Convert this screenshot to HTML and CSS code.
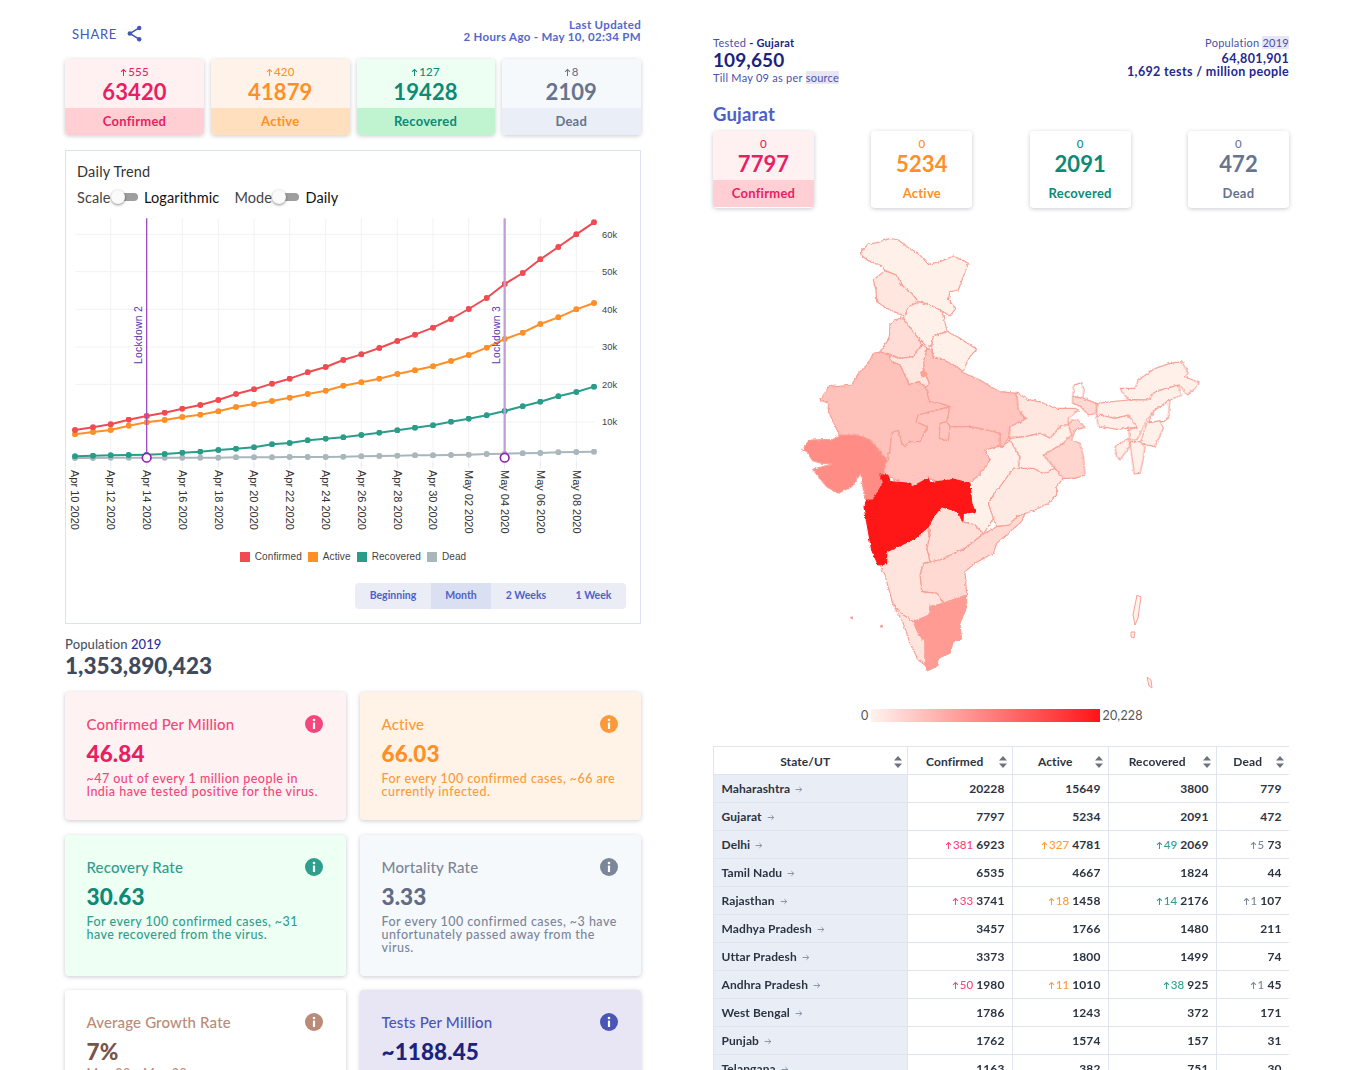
FILE: index.html
```html
<!DOCTYPE html>
<html lang="en">
<head>
<meta charset="utf-8">
<title>India COVID-19 Tracker</title>
<link rel="stylesheet" href="styles.css">
</head>
<body>
<svg class="sprite" aria-hidden="true">
  <symbol id="up" viewBox="0 0 10 12"><path d="M5 11V2M1.5 5.2 5 1.6l3.5 3.6" fill="none" stroke="currentColor" stroke-width="1.5"/></symbol>
  <symbol id="right" viewBox="0 0 12 10"><path d="M1 5h9M6.6 1.5 10.2 5 6.6 8.5" fill="none" stroke="currentColor" stroke-width="1.3"/></symbol>
  <symbol id="info" viewBox="0 0 18 18"><circle cx="9" cy="9" r="9" fill="currentColor"/><circle cx="9" cy="5" r="1.3" fill="#fff"/><rect x="7.9" y="7.5" width="2.2" height="6.5" rx=".6" fill="#fff"/></symbol>
  <symbol id="sort" viewBox="0 0 8 12"><path d="M4 0 8 4.6H0ZM4 12 0 7.4h8Z" fill="#6b7280"/></symbol>
</svg>
<main class="page">
  <section class="col">
    <header class="top">
      <div class="share">SHARE
        <svg class="share-ic" viewBox="0 0 16 18"><path d="M13 3 3 9l10 6" fill="none" stroke="currentColor" stroke-width="1.6"/><circle cx="13" cy="3" r="2.4" fill="currentColor"/><circle cx="3" cy="9" r="2.4" fill="currentColor"/><circle cx="13" cy="15" r="2.4" fill="currentColor"/></svg>
      </div>
      <div class="updated">Last Updated<br>2 Hours Ago - May 10, 02:34 PM</div>
    </header>

    <div class="stats">
      <div class="stat red"><div class="stat-top"><div class="delta"><svg class="up"><use href="#up"/></svg>555</div><div class="num">63420</div></div><div class="lab">Confirmed</div></div>
      <div class="stat orange"><div class="stat-top"><div class="delta"><svg class="up"><use href="#up"/></svg>420</div><div class="num">41879</div></div><div class="lab">Active</div></div>
      <div class="stat green"><div class="stat-top"><div class="delta"><svg class="up"><use href="#up"/></svg>127</div><div class="num">19428</div></div><div class="lab">Recovered</div></div>
      <div class="stat grey"><div class="stat-top"><div class="delta"><svg class="up"><use href="#up"/></svg>8</div><div class="num">2109</div></div><div class="lab">Dead</div></div>
    </div>

    <div class="chart-card">
      <div class="chart-title">Daily Trend</div>
      <div class="controls">
        <span class="ctl">Scale</span><span class="switch"><i></i></span><span class="val">Logarithmic</span>
        <span class="ctl mode">Mode</span><span class="switch"><i></i></span><span class="val">Daily</span>
      </div>
      <svg class="chart" viewBox="18 15 1722 990">
        <defs>
          <marker id="mr" markerWidth="3" markerHeight="3" refX="1.5" refY="1.5" viewBox="0 0 3 3"><circle cx="1.5" cy="1.5" r="1.5" fill="#ef4b50"/></marker>
          <marker id="mo" markerWidth="3" markerHeight="3" refX="1.5" refY="1.5" viewBox="0 0 3 3"><circle cx="1.5" cy="1.5" r="1.5" fill="#ff8f26"/></marker>
          <marker id="mg" markerWidth="3" markerHeight="3" refX="1.5" refY="1.5" viewBox="0 0 3 3"><circle cx="1.5" cy="1.5" r="1.5" fill="#2a9d8a"/></marker>
          <marker id="ms" markerWidth="3" markerHeight="3" refX="1.5" refY="1.5" viewBox="0 0 3 3"><circle cx="1.5" cy="1.5" r="1.5" fill="#a9b6bc"/></marker>
        </defs>
        <path class="grid" d="M45 73H1602M45 185H1602M45 298H1602M45 411H1602M45 523H1602M45 636H1602M152 25V768M260 25V768M367 25V768M475 25V768M582 25V768M689 25V768M797 25V768M904 25V768M1012 25V768M1119 25V768M1226 25V768M1334 25V768M1441 25V768M1549 25V768"/>
        <path class="tick" d="M45 758V776M152 758V776M260 758V776M367 758V776M475 758V776M582 758V776M689 758V776M797 758V776M904 758V776M1012 758V776M1119 758V776M1226 758V776M1334 758V776M1441 758V776M1549 758V776"/>
        <polyline class="ln ls" points="45,744 99,744 152,743 206,743 260,743 314,743 367,743 421,743 475,743 528,742 582,742 636,742 689,741 743,741 797,741 850,740 904,739 958,738 1012,737 1065,736 1119,736 1173,735 1226,734 1280,732 1334,731 1388,730 1441,729 1495,727 1549,726 1602,725"/>
        <polyline class="ln lg" points="45,739 99,737 152,736 206,735 260,734 314,732 367,728 421,725 475,720 528,716 582,712 636,703 689,699 743,691 797,686 850,682 904,675 958,668 1012,661 1065,653 1119,646 1173,635 1226,626 1280,616 1334,603 1388,589 1441,575 1495,559 1549,546 1602,530"/>
        <polyline class="ln lo" points="45,673 99,666 152,660 206,647 260,637 314,630 367,621 421,614 475,604 528,591 582,582 636,573 689,563 743,552 797,542 850,527 904,517 958,506 1012,492 1065,481 1119,469 1173,453 1226,435 1280,413 1334,387 1388,368 1441,342 1495,322 1549,298 1602,279"/>
        <polyline class="ln lr" points="45,660 99,652 152,643 206,629 260,618 314,608 367,596 421,585 475,570 528,552 582,538 636,521 689,506 743,487 797,471 850,450 904,433 958,414 1012,393 1065,374 1119,353 1173,327 1226,297 1280,264 1334,222 1388,189 1441,148 1495,111 1549,73 1602,37"/>
        <line class="lock l2" x1="260" y1="25" x2="260" y2="730"/>
        <line class="lock l3" x1="1334" y1="25" x2="1334" y2="730"/>
        <circle class="lock-dot" cx="260" cy="743" r="13"/>
        <circle class="lock-dot" cx="1334" cy="743" r="13"/>
        <text class="lock-t" transform="rotate(-90 235 462)" x="235" y="462" dy="11">Lockdown 2</text>
        <text class="lock-t" transform="rotate(-90 1309 462)" x="1309" y="462" dy="11">Lockdown 3</text>
        <g class="ylab">
          <text x="1626" y="73" dy="10">60k</text><text x="1626" y="185" dy="10">50k</text><text x="1626" y="298" dy="10">40k</text><text x="1626" y="411" dy="10">30k</text><text x="1626" y="523" dy="10">20k</text><text x="1626" y="636" dy="10">10k</text>
        </g>
        <g class="xlab">
          <text transform="rotate(90 45 780)" x="45" y="780" dy="11">Apr 10 2020</text>
          <text transform="rotate(90 152 780)" x="152" y="780" dy="11">Apr 12 2020</text>
          <text transform="rotate(90 260 780)" x="260" y="780" dy="11">Apr 14 2020</text>
          <text transform="rotate(90 367 780)" x="367" y="780" dy="11">Apr 16 2020</text>
          <text transform="rotate(90 475 780)" x="475" y="780" dy="11">Apr 18 2020</text>
          <text transform="rotate(90 582 780)" x="582" y="780" dy="11">Apr 20 2020</text>
          <text transform="rotate(90 689 780)" x="689" y="780" dy="11">Apr 22 2020</text>
          <text transform="rotate(90 797 780)" x="797" y="780" dy="11">Apr 24 2020</text>
          <text transform="rotate(90 904 780)" x="904" y="780" dy="11">Apr 26 2020</text>
          <text transform="rotate(90 1012 780)" x="1012" y="780" dy="11">Apr 28 2020</text>
          <text transform="rotate(90 1119 780)" x="1119" y="780" dy="11">Apr 30 2020</text>
          <text transform="rotate(90 1226 780)" x="1226" y="780" dy="11">May 02 2020</text>
          <text transform="rotate(90 1334 780)" x="1334" y="780" dy="11">May 04 2020</text>
          <text transform="rotate(90 1441 780)" x="1441" y="780" dy="11">May 06 2020</text>
          <text transform="rotate(90 1549 780)" x="1549" y="780" dy="11">May 08 2020</text>
        </g>
      </svg>
      <div class="legend">
        <span class="lg-i"><i class="sw-r"></i>Confirmed</span>
        <span class="lg-i"><i class="sw-o"></i>Active</span>
        <span class="lg-i"><i class="sw-g"></i>Recovered</span>
        <span class="lg-i"><i class="sw-s"></i>Dead</span>
      </div>
      <div class="ranges">
        <span class="rg w-b">Beginning</span><span class="rg w-m on">Month</span><span class="rg w-2">2 Weeks</span><span class="rg w-1">1 Week</span>
      </div>
    </div>

    <div class="pop-label">Population <b>2019</b></div>
    <div class="pop-num">1,353,890,423</div>

    <div class="facts">
      <article class="fact f-red"><div class="f-head"><span>Confirmed Per Million</span><svg class="info"><use href="#info"/></svg></div><div class="f-num">46.84</div><p>~47 out of every 1 million people in India have tested positive for the virus.</p></article>
      <article class="fact f-orange"><div class="f-head"><span>Active</span><svg class="info"><use href="#info"/></svg></div><div class="f-num">66.03</div><p>For every 100 confirmed cases, ~66 are currently infected.</p></article>
      <article class="fact f-green"><div class="f-head"><span>Recovery Rate</span><svg class="info"><use href="#info"/></svg></div><div class="f-num">30.63</div><p>For every 100 confirmed cases, ~31 have recovered from the virus.</p></article>
      <article class="fact f-grey"><div class="f-head"><span>Mortality Rate</span><svg class="info"><use href="#info"/></svg></div><div class="f-num">3.33</div><p>For every 100 confirmed cases, ~3 have unfortunately passed away from the virus.</p></article>
      <article class="fact f-brown"><div class="f-head"><span>Average Growth Rate</span><svg class="info"><use href="#info"/></svg></div><div class="f-num">7%</div><p>May 03 - May 09</p></article>
      <article class="fact f-blue"><div class="f-head"><span>Tests Per Million</span><svg class="info"><use href="#info"/></svg></div><div class="f-num">~1188.45</div></article>
    </div>
  </section>

  <section class="col">
    <div class="tests">
      <div>
        <div class="t-sm">Tested <b>- Gujarat</b></div>
        <div class="t-big">109,650</div>
        <div class="t-sm">Till May 09 as per <mark>source</mark></div>
      </div>
      <div class="t-right">
        <div class="t-sm">Population <mark>2019</mark></div>
        <div class="t-mid t-first">64,801,901</div>
        <div class="t-mid">1,692 tests / million people</div>
      </div>
    </div>
    <h2 class="state">Gujarat</h2>
    <div class="stats2">
      <div class="stat2 red on"><div class="stat-top"><div class="delta">0</div><div class="num">7797</div></div><div class="lab">Confirmed</div></div>
      <div class="stat2 orange"><div class="stat-top"><div class="delta">0</div><div class="num">5234</div></div><div class="lab">Active</div></div>
      <div class="stat2 green"><div class="stat-top"><div class="delta">0</div><div class="num">2091</div></div><div class="lab">Recovered</div></div>
      <div class="stat2 grey"><div class="stat-top"><div class="delta">0</div><div class="num">472</div></div><div class="lab">Dead</div></div>
    </div>

    <svg class="map" viewBox="713 230 576 470">
      <defs>
        <filter id="rough" x="-3%" y="-3%" width="106%" height="106%">
          <feTurbulence type="fractalNoise" baseFrequency=".3" numOctaves="2" seed="4"/>
          <feDisplacementMap in="SourceGraphic" scale="3" xChannelSelector="R" yChannelSelector="G"/>
        </filter>
      </defs>
      <g class="rough">
      <g transform="translate(790 230) scale(.33333)" class="states">
        <path fill="#fff0e9" d="M213 75 218 60 235 42 262 38 300 25 325 30 350 50 385 70 415 103 450 95 490 78 535 100 520 140 505 180 480 185 475 210 498 235 480 257 455 242 420 225 385 215 365 190 340 170 318 135 285 122 270 105 235 92Z"/>
        <path fill="#ffe6df" d="M250 150 285 122 318 135 340 170 365 190 385 215 355 232 345 258 300 240 260 215 258 180Z"/>
        <path fill="#fff0e9" d="M355 232 385 215 420 225 455 242 472 305 430 318 425 350 405 345 385 325 365 300 340 262 345 258Z"/>
        <path fill="#ffdcd5" d="M270 365 298 325 300 280 335 262 365 300 385 325 395 345 370 380 330 385 300 372Z"/>
        <path fill="#fff0e9" d="M425 350 430 318 472 305 505 322 560 358 535 385 520 425 500 410 450 385 430 385Z"/>
        <path fill="#ffe6df" d="M298 375 330 385 370 380 395 345 415 355 402 390 402 420 418 460 408 472 385 455 358 465 330 405 305 395Z"/>
        <path fill="#ffc2bb" d="M90 510 120 465 140 470 185 465 205 430 235 400 250 370 270 366 298 375 305 395 330 405 358 465 385 455 408 472 418 515 445 518 480 530 385 555 378 575 412 590 390 635 360 635 345 650 335 640 325 600 305 610 300 660 290 690 240 630 205 615 150 620 130 575 115 545 115 520Z"/>
        <path fill="#ffc5be" d="M425 355 430 385 450 385 500 410 520 428 570 450 610 475 630 485 680 490 685 540 708 567 660 590 655 625 640 650 630 648 630 610 590 600 540 590 480 590 470 575 480 530 445 518 418 515 408 472 418 460 402 420 402 390 410 358Z"/>
        <path fill="#ffc5be" d="M378 575 385 555 480 530 470 575 480 590 540 590 590 600 630 610 630 648 585 660 600 690 585 720 540 760 495 748 445 755 415 745 365 770 330 755 280 735 270 710 295 690 300 660 305 610 325 600 335 640 345 650 360 635 390 635 412 590Z"/>
        <path fill="none" d="M470 575 450 580 448 625 475 632 480 590"/>
        <path fill="#ff8c85" d="M38 660 50 640 60 630 130 628 150 615 205 615 240 630 290 690 280 735 270 775 250 810 225 810 212 730 185 770 145 790 110 770 68 718 128 702 95 700 68 692 50 665Z"/>
        <path fill="#ff9f95" d="M392 428 402 420 412 435 398 442Z"/>
      </g>
      <g transform="translate(790 460) scale(.33333)" class="states">
        <path fill="#fff0e9" d="M540 70 585 25 600 0 585-30 630-42 640-40 660-60 690-10 685 25 670 25 645 80 620 90 595 130 610 175 580 222 555 195 520 185 520 160 555 155 545 130Z"/>
        <path fill="#ffeae3" d="M630 80 670 25 730 25 760 40 795 25 820 55 800 80 800 105 775 130 735 150 680 170 660 195 620 200 610 175 595 130 620 90Z"/>
        <path fill="#ffe0d9" d="M415 200 430 170 455 140 505 155 518 185 555 195 580 222 525 265 450 300 400 310 420 305 410 265 420 225Z"/>
        <path fill="#ffd9d2" d="M680 170 705 160 695 185 660 215 620 250 610 280 555 310 525 335 530 405 460 430 440 400 395 395 390 345 400 310 450 300 525 265 580 222 620 200 660 195Z"/>
        <path fill="#ffe4dd" d="M270 315 290 310 290 275 345 250 375 235 415 200 420 225 410 265 420 305 400 310 390 345 395 395 440 400 460 430 420 440 418 465 370 485 340 465 310 435 290 365 285 345Z"/>
        <path fill="#ffe4dd" d="M310 435 340 465 370 485 385 520 405 545 405 615 385 600 360 550 340 490Z"/>
        <path fill="#ff9b93" d="M460 430 530 405 530 440 510 490 515 540 490 545 480 580 445 595 440 620 412 632 405 615 405 545 385 520 370 485 418 465 420 440Z"/>
        <path class="mh" fill="#ff1417" d="M270 45 293 45 300 65 360 70 365 82 415 55 420 68 480 60 490 58 540 70 545 130 555 155 520 160 518 185 505 155 455 140 430 170 415 200 375 235 345 250 290 275 290 310 265 315 245 270 222 140 230 120 250 120 270 85 280 65Z"/>
        <path fill="#fbb" d="M183 471h4v5h-4ZM273 496h4v5h-4Z"/>
      </g>
      <g transform="translate(1000 340) scale(.33333)" class="states">
        <path fill="#ffe6df" d="M50 155 80 178 120 185 165 205 225 205 235 210 205 235 205 255 185 255 150 295 120 280 75 290 28 292 30 260 78 237 55 210Z"/>
        <path fill="#fff0e9" d="M28 295 75 290 120 280 150 295 185 255 205 255 215 285 190 310 130 345 165 385 130 400 100 385 55 385 60 350 30 300Z"/>
        <path fill="#ffd5ce" d="M215 240 235 240 255 262 225 270 215 300 240 310 250 350 255 405 225 415 190 415 165 385 130 345 190 310 215 285 205 255Z"/>
        <path fill="#fff" d="M218 170 222 135 245 128 252 150 248 175Z"/>
        <path fill="#ffd9d2" d="M218 170 250 175 290 190 288 220 265 225 240 198 218 190Z"/>
        <path fill="#fff0e9" d="M362 145 405 145 415 120 465 85 510 70 545 65 565 100 555 110 597 128 585 145 560 165 540 135 500 145 465 155 445 180 385 178 365 155Z"/>
        <path fill="#fff0e9" d="M290 190 385 180 445 180 465 155 535 135 545 165 510 180 465 210 440 240 430 260 410 300 390 300 385 268 410 262 385 225 345 235 300 228 290 230Z"/>
        <path fill="#fff0e9" d="M290 230 300 225 345 235 385 225 410 262 350 268 295 258Z"/>
        <path fill="#fff" d="M510 180 508 195 505 235 490 245 445 245 465 210Z"/>
        <path fill="#fff0e9" d="M440 250 480 242 490 265 465 320 420 310Z"/>
        <path fill="#fff0e9" d="M390 305 420 305 435 320 430 355 420 400 403 402 395 350Z"/>
        <path fill="#fff0e9" d="M345 320 385 295 390 320 370 345 360 360 350 350Z"/>
      </g>
      </g>
      <path class="islands" d="M1137 595 1141 597 1138 618 1135 625 1133 615ZM1131 632 1135 632 1134 638 1131 637ZM1147 677 1151 680 1152 688 1149 686Z"/>
    </svg>

    <div class="scale"><span>0</span><i class="ramp"></i><span>20,228</span></div>

    <div class="table-wrap">
      <table class="tbl">
        <colgroup><col class="c1"><col class="c2"><col class="c3"><col class="c4"><col class="c5"></colgroup>
        <thead><tr>
          <th>State/UT<svg class="sort"><use href="#sort"/></svg></th>
          <th>Confirmed<svg class="sort"><use href="#sort"/></svg></th>
          <th>Active<svg class="sort"><use href="#sort"/></svg></th>
          <th>Recovered<svg class="sort"><use href="#sort"/></svg></th>
          <th>Dead<svg class="sort"><use href="#sort"/></svg></th>
        </tr></thead>
        <tbody>
          <tr><td>Maharashtra<svg class="go"><use href="#right"/></svg></td><td>20228</td><td>15649</td><td>3800</td><td>779</td></tr>
          <tr><td>Gujarat<svg class="go"><use href="#right"/></svg></td><td>7797</td><td>5234</td><td>2091</td><td>472</td></tr>
          <tr><td>Delhi<svg class="go"><use href="#right"/></svg></td><td><span class="d red"><svg class="up"><use href="#up"/></svg>381</span>6923</td><td><span class="d orange"><svg class="up"><use href="#up"/></svg>327</span>4781</td><td><span class="d green"><svg class="up"><use href="#up"/></svg>49</span>2069</td><td><span class="d grey"><svg class="up"><use href="#up"/></svg>5</span>73</td></tr>
          <tr><td>Tamil Nadu<svg class="go"><use href="#right"/></svg></td><td>6535</td><td>4667</td><td>1824</td><td>44</td></tr>
          <tr><td>Rajasthan<svg class="go"><use href="#right"/></svg></td><td><span class="d red"><svg class="up"><use href="#up"/></svg>33</span>3741</td><td><span class="d orange"><svg class="up"><use href="#up"/></svg>18</span>1458</td><td><span class="d green"><svg class="up"><use href="#up"/></svg>14</span>2176</td><td><span class="d grey"><svg class="up"><use href="#up"/></svg>1</span>107</td></tr>
          <tr><td>Madhya Pradesh<svg class="go"><use href="#right"/></svg></td><td>3457</td><td>1766</td><td>1480</td><td>211</td></tr>
          <tr><td>Uttar Pradesh<svg class="go"><use href="#right"/></svg></td><td>3373</td><td>1800</td><td>1499</td><td>74</td></tr>
          <tr><td>Andhra Pradesh<svg class="go"><use href="#right"/></svg></td><td><span class="d red"><svg class="up"><use href="#up"/></svg>50</span>1980</td><td><span class="d orange"><svg class="up"><use href="#up"/></svg>11</span>1010</td><td><span class="d green"><svg class="up"><use href="#up"/></svg>38</span>925</td><td><span class="d grey"><svg class="up"><use href="#up"/></svg>1</span>45</td></tr>
          <tr><td>West Bengal<svg class="go"><use href="#right"/></svg></td><td>1786</td><td>1243</td><td>372</td><td>171</td></tr>
          <tr><td>Punjab<svg class="go"><use href="#right"/></svg></td><td>1762</td><td>1574</td><td>157</td><td>31</td></tr>
          <tr><td>Telangana<svg class="go"><use href="#right"/></svg></td><td>1163</td><td>382</td><td>751</td><td>30</td></tr>
        </tbody>
      </table>
    </div>
  </section>
</main>
</body>
</html>
```
FILE: styles.css
```css
* { box-sizing: border-box; }
html, body { margin: 0; height: 1070px; overflow: hidden; background: #fff; }
body { font-family: Lato, "Noto Sans", sans-serif; color: #333; }
.sprite { display: none; }
.page { display: grid; grid-template-columns: 576px 576px; column-gap: 72px; padding-left: 65px; height: 1070px; overflow: hidden; }
.col { min-width: 0; }

.top { display: flex; justify-content: space-between; align-items: flex-start; height: 59px; padding-top: 19px; }
.share { display: flex; align-items: center; gap: 10px; color: #4357b3; font-size: 13px; letter-spacing: .7px; padding: 6px 0 0 7px; }
.share-ic { width: 15px; height: 17px; }
.updated { text-align: right; font-size: 11.5px; line-height: 12px; font-weight: 700; color: #5468c8; letter-spacing: .33px; }

.red { --c: #e91e63; --t: #fff0f2; --b: #ffcfd3; --soft: #f4467a; }
.orange { --c: #ff8f26; --t: #fff3e9; --b: #ffdfbe; --soft: #fb9a3a; }
.green { --c: #0d8a76; --t: #edfff3; --b: #c0f3d0; --soft: #2f9e8d; }
.grey { --c: #67748e; --t: #f6f9fc; --b: #eaeef7; --soft: #7b8699; }

.stats { display: grid; grid-template-columns: 139px 138.5px 138px 139.5px; column-gap: 7px; }
.stat, .stat2 { border-radius: 4px; overflow: hidden; box-shadow: 0 1px 4px rgba(60, 70, 90, .28); color: var(--c); text-align: center; }
.stat { height: 76px; }
.stat-top { height: 49px; background: var(--t); padding-top: 7px; }
.delta { font-size: 11.5px; line-height: 12px; font-weight: 500; letter-spacing: .2px; }
.up { width: 7px; height: 9px; vertical-align: -.5px; margin-right: 1px; color: inherit; }
.num { font-size: 22px; line-height: 27px; font-weight: 700; letter-spacing: .1px; }
.lab { height: 27px; background: var(--b); font-size: 13px; line-height: 26px; font-weight: 700; letter-spacing: .25px; }

.chart-card { margin-top: 15px; height: 474px; border: 1px solid #dde3ee; padding-top: 12px; }
.chart-title { font-size: 14.5px; line-height: 18px; padding-left: 11px; color: #333; letter-spacing: .2px; }
.controls { display: flex; align-items: center; height: 18px; margin-top: 7px; padding-left: 11px; font-size: 14.5px; letter-spacing: .1px; }
.ctl { color: #444; }
.val { color: #111; margin-left: 6.5px; }
.mode { margin-left: 15px; }
.switch { position: relative; width: 20px; height: 8px; border-radius: 4px; background: #9e9e9e; margin-left: 7px; }
.switch i { position: absolute; left: -7px; top: -3px; width: 14px; height: 14px; border-radius: 50%; background: #fafafa; box-shadow: 0 1px 3px rgba(0, 0, 0, .45); }

.chart { display: block; width: 574px; height: 330px; margin-top: 9px; }
.grid { fill: none; stroke: #f1f2f5; stroke-width: 3; }
.tick { fill: none; stroke: #dfe2e8; stroke-width: 2; }
.ln { fill: none; stroke-width: 6; stroke-linejoin: round; }
.lr { stroke: #ef4b50; marker-start: url(#mr); marker-mid: url(#mr); marker-end: url(#mr); }
.lo { stroke: #ff8f26; marker-start: url(#mo); marker-mid: url(#mo); marker-end: url(#mo); }
.lg { stroke: #2a9d8a; marker-start: url(#mg); marker-mid: url(#mg); marker-end: url(#mg); }
.ls { stroke: #a9b6bc; marker-start: url(#ms); marker-mid: url(#ms); marker-end: url(#ms); }
.lock { stroke-width: 4; }
.l2 { stroke: #a64bc0; }
.l3 { stroke: #c49ed8; stroke-width: 7; }
.lock-dot { fill: #fff; stroke: #8e24aa; stroke-width: 5; }
.lock-t { fill: #5e35b1; font-family: "Liberation Sans", sans-serif; font-size: 31px; letter-spacing: .9px; }
.ylab text { fill: #444; font-family: "Liberation Sans", sans-serif; font-size: 28px; }
.xlab text { fill: #333; font-family: "Liberation Sans", sans-serif; font-size: 33px; }

.legend { display: flex; justify-content: center; gap: 6px; height: 14px; margin-top: 5px; font-family: "Liberation Sans", sans-serif; font-size: 10px; line-height: 14px; color: #444; letter-spacing: .1px; }
.lg-i { display: flex; align-items: center; gap: 5px; }
.lg-i i { width: 10px; height: 10px; }
.sw-r { background: #ef4b50; }
.sw-o { background: #ff8f26; }
.sw-g { background: #2a9d8a; }
.sw-s { background: #a9b6bc; }

.ranges { display: flex; width: 271px; height: 26px; margin: 19px 14px 0 auto; border-radius: 4px; overflow: hidden; background: #eaedf6; font-size: 10.5px; line-height: 24px; font-weight: 700; color: #4f61c8; text-align: center; }
.rg { display: block; }
.w-b { width: 76px; }
.w-m { width: 60px; }
.w-2 { width: 70px; }
.w-1 { width: 65px; }
.on { background: #dbdff2; }

.pop-label { margin-top: 12px; font-size: 13px; line-height: 16px; font-weight: 500; color: #4b5568; letter-spacing: .1px; }
.pop-label b { color: #2b2f9e; font-weight: 500; }
.pop-num { font-size: 22.5px; line-height: 28px; font-weight: 900; color: #3f4a5c; letter-spacing: .05px; }

.facts { display: grid; grid-template-columns: 281px 281px; column-gap: 14px; row-gap: 14.5px; margin-top: 12px; }
.fact { padding: 24px 21px 22px 21.5px; border-radius: 4px; box-shadow: 0 1px 4px rgba(60, 70, 90, .28); color: var(--soft); background: var(--t); }
.f-red { --soft: #f4467a; --n: #e91e63; --t: #fff2f3; }
.f-orange { --soft: #fb9a3a; --n: #ff8f26; --t: #fff3e8; }
.f-green { --soft: #2f9e8d; --n: #0d8a76; --t: #eefff4; }
.f-grey { --soft: #7b8699; --n: #5f6c85; --t: #f6f9fc; }
.f-brown { --soft: #b98b78; --n: #795548; --t: #fff; height: 120px; }
.f-blue { --soft: #4b55b5; --n: #1a237e; --t: #e8e6f5; height: 120px; }
.f-head { display: flex; justify-content: space-between; align-items: center; height: 16px; font-size: 15px; font-weight: 500; letter-spacing: .15px; padding-right: 2px; }
.info { width: 18px; height: 18px; }
.f-num { margin-top: 10px; font-size: 22.5px; line-height: 24px; font-weight: 900; color: var(--n); letter-spacing: .1px; }
.fact p { margin: 6px 0 0; font-size: 12.5px; line-height: 13px; font-weight: 500; letter-spacing: .46px; }
.f-brown p { margin-top: 3px; }

.tests { display: flex; justify-content: space-between; height: 96px; padding-top: 36px; color: #2b2f9e; }
.t-sm { font-size: 11px; line-height: 13px; color: #4a50a8; letter-spacing: .25px; }
.t-sm b { font-weight: 700; color: #1a237e; }
.t-big { font-size: 19px; line-height: 22px; font-weight: 700; color: #1a237e; letter-spacing: .1px; }
.t-right { text-align: right; }
.t-mid { font-size: 12.5px; line-height: 13px; font-weight: 700; color: #24288e; letter-spacing: .36px; }
.t-first { margin-top: 3px; }
mark { background: #e8e6f5; color: inherit; }
.state { margin: 6px 0 0; font-size: 18.5px; line-height: 24px; font-weight: 700; color: #4c5fc7; letter-spacing: .2px; }
.stats2 { display: flex; justify-content: space-between; margin-top: 5px; }
.stat2 { width: 101px; height: 77px; background: #fff; }
.stat2 .stat-top { background: #fff; }
.stat2 .lab { background: #fff; }
.stat2.on .stat-top { background: var(--t); }
.stat2.on .lab { background: var(--b); }

.map { display: block; width: 576px; height: 470px; margin-top: 22px; }
.rough { filter: url(#rough); }
.states path { stroke: #f8a096; stroke-width: 3.5; stroke-linejoin: round; }
.states .mh { stroke: #ff1417; }
.islands { fill: #fff0e9; stroke: #f8a096; stroke-width: 1; }
.scale { display: flex; align-items: center; gap: 2px; height: 14px; margin: 8px 0 0 148px; font-size: 12.5px; color: #555; letter-spacing: .2px; }
.ramp { width: 229px; height: 13px; margin-left: 1px; background: linear-gradient(90deg, #fff3ee, #ff1417); }

.table-wrap { margin-top: 24px; height: 400px; overflow: hidden; }
.tbl { width: 576px; table-layout: fixed; border-collapse: collapse; font-size: 12px; font-weight: 700; color: #2c3442; letter-spacing: .1px; }
.c1 { width: 194px; }
.c2 { width: 105px; }
.c3 { width: 96px; }
.c4 { width: 108px; }
.c5 { width: 73px; }
.tbl th, .tbl td { height: 28px; border: 1px solid #dfe4ee; padding: 0 7.5px; }
.tbl th { position: relative; font-weight: 700; text-align: center; padding: 1px 18px 0 7.5px; }
.tbl td { text-align: right; }
.tbl td:first-child { text-align: left; background: #e9eef6; }
.sort { position: absolute; right: 5px; top: 9px; width: 8px; height: 12px; }
.go { width: 8px; height: 7px; margin-left: 5px; color: #7b8699; }
.d { color: var(--soft); font-weight: 500; margin-right: 3px; font-size: 11.5px; }
```
